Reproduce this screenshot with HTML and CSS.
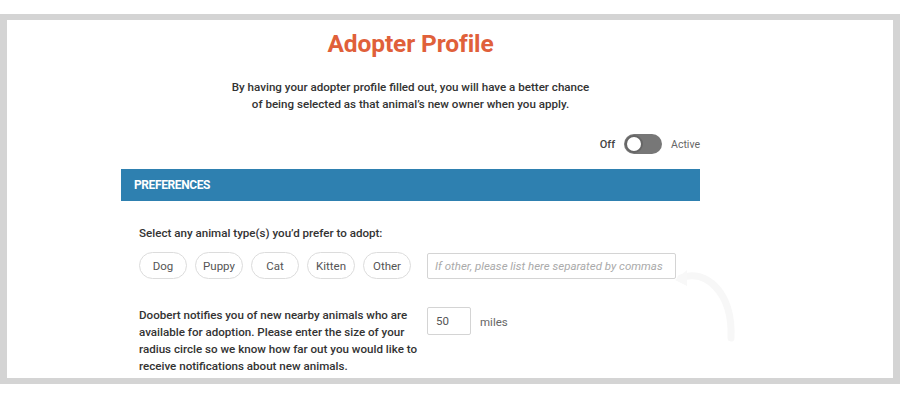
FILE: index.html
```html
<!DOCTYPE html>
<html>
<head>
<meta charset="utf-8">
<link rel="stylesheet" href="styles.css">
</head>
<body>
<div class="frame">
  <div class="content">
    <h1 class="title">Adopter Profile</h1>
    <p class="intro">By having your adopter profile filled out, you will have a better chance<br>of being selected as that animal’s new owner when you apply.</p>
    <div class="toggle-row">
      <span class="toggle-label">Off</span>
      <span class="switch"><span class="knob"></span></span>
      <span class="toggle-label light">Active</span>
    </div>
    <div class="section-bar">PREFERENCES</div>
    <div class="section-body">
      <div class="label">Select any animal type(s) you’d prefer to adopt:</div>
      <div class="chips-row">
        <span class="chip">Dog</span>
        <span class="chip">Puppy</span>
        <span class="chip">Cat</span>
        <span class="chip">Kitten</span>
        <span class="chip">Other</span>
        <span class="text-input">If other, please list here separated by commas</span>
      </div>
      <div class="radius-row">
        <p class="radius-text">Doobert notifies you of new nearby animals who are available for adoption. Please enter the size of your radius circle so we know how far out you would like to receive notifications about new animals.</p>
        <span class="num-input">50</span>
        <span class="unit">miles</span>
      </div>
    </div>
  </div>
  <svg class="ghost" width="70" height="80" viewBox="0 0 70 80"><path d="M6 14 C 30 4, 58 28, 56 74" stroke="#f7f7f7" stroke-width="7" fill="none" stroke-linecap="round"/><path d="M0 16 L12 6 L12 22 Z" fill="#f8f8f8"/></svg>
</div>
</body>
</html>
```
FILE: styles.css
```css
* { box-sizing: border-box; }
body {
  margin: 0;
  background: #fff;
  font-family: Roboto, "Noto Sans", Arial, sans-serif;
}
.frame {
  position: relative;
  margin-top: 14px;
  height: 370px;
  border-style: solid;
  border-color: #d4d4d4;
  border-width: 6px 7px 6px 7px;
  background: #fff;
  overflow: hidden;
}
.content {
  margin-left: 114px;
  width: 579px;
}
.title {
  margin: 0;
  padding-top: 9px;
  text-align: center;
  font-size: 24.5px;
  line-height: 30px;
  font-weight: 700;
  color: #e0603a;
  letter-spacing: -0.1px;
}
.intro {
  margin: 20px 0 0;
  text-align: center;
  font-size: 11.6px;
  line-height: 17px;
  font-weight: 500;
  color: #333;
}
.toggle-row {
  display: flex;
  justify-content: flex-end;
  align-items: center;
  gap: 9px;
  margin-top: 21px;
  height: 20px;
}
.toggle-label {
  font-size: 11px;
  font-weight: 500;
  color: #444;
}
.toggle-label.light {
  font-weight: 400;
  font-size: 10.5px;
  color: #666;
}
.switch {
  width: 38px;
  height: 20px;
  border-radius: 10px;
  background: #777;
  position: relative;
  display: block;
}
.knob {
  position: absolute;
  left: 1px;
  top: 1px;
  width: 18px;
  height: 18px;
  border-radius: 50%;
  background: #fff;
  border: 2px solid #666;
}
.section-bar {
  margin-top: 15px;
  height: 32px;
  background: #2e80b0;
  color: #fff;
  font-weight: 700;
  font-size: 12px;
  line-height: 32px;
  padding-left: 13px;
  letter-spacing: -0.4px;
}
.section-body {
  padding: 24px 0 0 18px;
}
.label {
  font-size: 11.6px;
  font-weight: 500;
  color: #333;
  line-height: 17px;
}
.chips-row {
  display: flex;
  align-items: center;
  gap: 8px;
  margin-top: 10px;
}
.chip {
  width: 48px;
  height: 27px;
  border: 1px solid #dcdcdc;
  border-radius: 14px;
  font-size: 11.5px;
  color: #555;
  display: flex;
  align-items: center;
  justify-content: center;
}
.text-input {
  margin-left: 8px;
  width: 249px;
  height: 26px;
  border: 1px solid #d4d4d4;
  border-radius: 2px;
  font-size: 11.5px;
  font-style: italic;
  color: #aaa;
  padding-left: 7px;
  line-height: 24px;
  white-space: nowrap;
}
.radius-row {
  display: flex;
  align-items: flex-start;
  margin-top: 28px;
}
.radius-text {
  margin: 0;
  width: 288px;
  font-size: 11.6px;
  line-height: 17px;
  font-weight: 500;
  color: #333;
}
.num-input {
  width: 44px;
  height: 28px;
  border: 1px solid #d4d4d4;
  border-radius: 2px;
  font-size: 11.5px;
  color: #555;
  padding-left: 8px;
  line-height: 26px;
}
.unit {
  margin-left: 9px;
  font-size: 11.5px;
  color: #666;
  line-height: 30px;
}
.ghost {
  position: absolute;
  left: 668px;
  top: 244px;
}
```
